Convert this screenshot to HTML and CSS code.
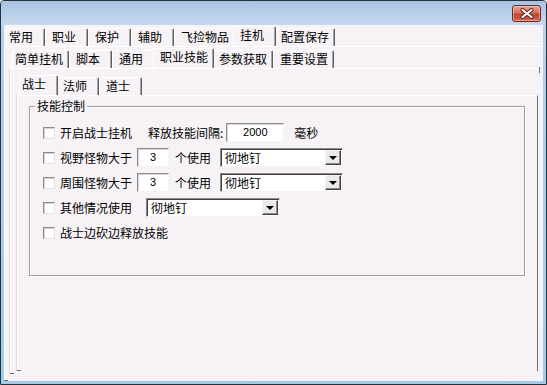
FILE: index.html
```html
<!DOCTYPE html>
<html lang="zh-CN">
  <head>
    <meta charset="UTF-8" />
    <title>挂机设置</title>
    <link rel="stylesheet" href="styles.css">
  </head>
  <body>
    <div class="window">
      <div class="titlebar">
        <button class="close-btn" title="关闭">
          <svg width="14" height="11" viewBox="0 0 14 11">
            <path d="M2.5 2 L11.5 9 M11.5 2 L2.5 9" stroke="#5b1d15" stroke-width="4" stroke-linecap="round" />
            <path d="M2.5 2 L11.5 9 M11.5 2 L2.5 9" stroke="#ffffff" stroke-width="2.2" stroke-linecap="round" />
          </svg>
        </button>
      </div>

      <div class="client">
        <div class="tabs">
          <span class="tab">常用</span>
          <span class="tab">职业</span>
          <span class="tab">保护</span>
          <span class="tab">辅助</span>
          <span class="tab long">飞捡物品</span>
          <span class="tab active">挂机</span>
          <span class="tab long">配置保存</span>
        </div>

        <div class="page page-main">
          <div class="tabs">
            <span class="tab long">简单挂机</span>
            <span class="tab">脚本</span>
            <span class="tab">通用</span>
            <span class="tab long active">职业技能</span>
            <span class="tab long">参数获取</span>
            <span class="tab long">重要设置</span>
          </div>

          <div class="page page-sub">
            <div class="tabs tabs-class">
              <span class="tab active">战士</span>
              <span class="tab">法师</span>
              <span class="tab">道士</span>
            </div>

            <div class="page page-class">
              <div class="group">
                <span class="group-title">技能控制</span>

                <div class="row">
                  <span class="check"></span>
                  <span class="label">开启战士挂机</span>
                  <span class="label gap-wide">释放技能间隔:</span>
                  <span class="input interval">2000</span>
                  <span class="label unit">毫秒</span>
                </div>

                <div class="row">
                  <span class="check"></span>
                  <span class="label">视野怪物大于</span>
                  <span class="input count">3</span>
                  <span class="label use">个使用</span>
                  <span class="select skill">
                    <span class="select-text">彻地钉</span>
                    <span class="drop-btn"></span>
                  </span>
                </div>

                <div class="row">
                  <span class="check"></span>
                  <span class="label">周围怪物大于</span>
                  <span class="input count">3</span>
                  <span class="label use">个使用</span>
                  <span class="select skill">
                    <span class="select-text">彻地钉</span>
                    <span class="drop-btn"></span>
                  </span>
                </div>

                <div class="row">
                  <span class="check"></span>
                  <span class="label">其他情况使用</span>
                  <span class="select other">
                    <span class="select-text">彻地钉</span>
                    <span class="drop-btn"></span>
                  </span>
                </div>

                <div class="row">
                  <span class="check"></span>
                  <span class="label">战士边砍边释放技能</span>
                </div>
              </div>
            </div>
          </div>
        </div>
      </div>
    </div>
  </body>
</html>
```

FILE: styles.css
```css
* {
  box-sizing: border-box;
}
body {
  margin: 0;
  font-family: "Noto Sans CJK SC", "Noto Sans", sans-serif;
  font-size: 12px;
  color: #000;
}
.window {
  width: 547px;
  height: 385px;
  border: 1px solid #26323e;
  border-radius: 4px 4px 0 0;
  background: linear-gradient(#b6d0ea, #9fcbee);
  padding: 0 3px 3px;
  display: flex;
  flex-direction: column;
  position: relative;
}
.titlebar {
  height: 24px;
  flex: none;
  margin: 0 -3px;
  background: linear-gradient(#a8c3e2, #c5d9ef);
  border-radius: 3px 3px 0 0;
}
.close-btn {
  position: absolute;
  left: 511px;
  top: 4px;
  width: 29px;
  height: 17px;
  padding: 0;
  border: 1px solid #6a2a22;
  border-radius: 3px;
  background: linear-gradient(#eba596, #d5705f 45%, #c0412f 55%, #cf6a55);
  box-shadow: inset 0 0 0 1px rgba(255, 220, 210, 0.5);
  display: flex;
  align-items: center;
  justify-content: center;
}
.client {
  flex: 1;
  background: #f6f2f6;
  display: flex;
  flex-direction: column;
}

/* tab strips */
.tabs {
  height: 21px;
  flex: none;
  display: flex;
  align-items: flex-end;
  padding-left: 2px;
}
.tab {
  position: relative;
  height: 18px;
  line-height: 16px;
  padding: 0 11px 0 6px;
  border: 1px solid;
  border-color: #ffffff #5f5f5f transparent #ffffff;
  border-bottom: 0;
  border-radius: 2px 2px 0 0;
  box-shadow: inset -1px 0 0 #a8a4a8;
  white-space: nowrap;
}
.tab:first-child {
  padding-left: 2px;
}
.tab.long {
  padding-right: 5px;
}
.tab.active {
  height: 20px;
  line-height: 16px;
  margin: 0 -2px;
  z-index: 1;
  background: #f6f2f6;
}
.tabs-class {
  margin-top: 5px;
  padding-left: 4px;
}

/* tab pages */
.page {
  position: relative;
  flex: 1;
  display: flex;
  flex-direction: column;
  border-top: 1px solid #ffffff;
  border-left: 1px solid #ffffff;
}
.page::after {
  content: "";
  position: absolute;
  left: -1px;
  bottom: 0;
  width: 4px;
  height: 1px;
  background: #6e6e6e;
}
.page-main {
  padding: 0 3px 7px 5px;
}
.page-sub {
  padding: 0 2px 3px 6px;
  box-shadow: -1px 0 0 #dedade;
}
.page-sub::before {
  content: "";
  position: absolute;
  right: 0;
  top: -2px;
  width: 1px;
  height: 6px;
  background: #6e6e6e;
}
.page-class {
  padding: 10px 12px 0 11px;
  border-right: 1px solid #6e6e6e;
  box-shadow: -1px 0 0 #dedade;
}

/* group box */
.group {
  position: relative;
  height: 170px;
  border: 1px solid #a09ca0;
  box-shadow: inset 1px 1px 0 #ffffff, 1px 1px 0 #ffffff;
  padding: 13px 0 0 13px;
}
.group-title {
  position: absolute;
  left: 5px;
  top: -9px;
  padding: 0 2px;
  line-height: 16px;
  background: #f6f2f6;
}
.row {
  height: 25px;
  display: flex;
  align-items: center;
}
.check {
  width: 12px;
  height: 12px;
  flex: none;
  background: #ffffff;
  border: 1px solid;
  border-color: #8c8a8c #e4e2e4 #e4e2e4 #8c8a8c;
  box-shadow: inset 1px 1px 0 #d4d0d4;
}
.label {
  margin-left: 5px;
  white-space: nowrap;
}
.gap-wide {
  margin-left: 16px;
}
.unit {
  margin-left: 10px;
}
.use {
  margin-left: 6px;
}
.input {
  height: 19px;
  background: #ffffff;
  border: 1px solid;
  border-color: #8c8a8c #f4f4f4 #f4f4f4 #8c8a8c;
  box-shadow: inset 1px 1px 0 #d8d4d8;
  font-family: "Liberation Sans", Arial, sans-serif;
  font-size: 11px;
  line-height: 17px;
  text-align: center;
}
.interval {
  width: 58px;
  margin-left: 3px;
}
.count {
  width: 32px;
  margin-left: 5px;
}
.select {
  height: 19px;
  display: flex;
  align-items: center;
  background: #ffffff;
  border: 1px solid;
  border-color: #8c8a8c #f4f4f4 #f4f4f4 #8c8a8c;
  box-shadow: inset 1px 1px 0 #404040;
  padding: 1px 1px 1px 4px;
}
.skill {
  width: 123px;
  margin-left: 9px;
}
.other {
  width: 134px;
  margin-left: 14px;
}
.select-text {
  flex: 1;
  line-height: 16px;
}
.drop-btn {
  position: relative;
  width: 16px;
  height: 15px;
  background: #ece9ec;
  border: 1px solid;
  border-color: #f4f4f4 #404040 #404040 #f4f4f4;
  box-shadow: inset -1px -1px 0 #8c8a8c;
}
.drop-btn::after {
  content: "";
  position: absolute;
  left: 3px;
  top: 5px;
  border-left: 4px solid transparent;
  border-right: 4px solid transparent;
  border-top: 4px solid #000;
}
```
